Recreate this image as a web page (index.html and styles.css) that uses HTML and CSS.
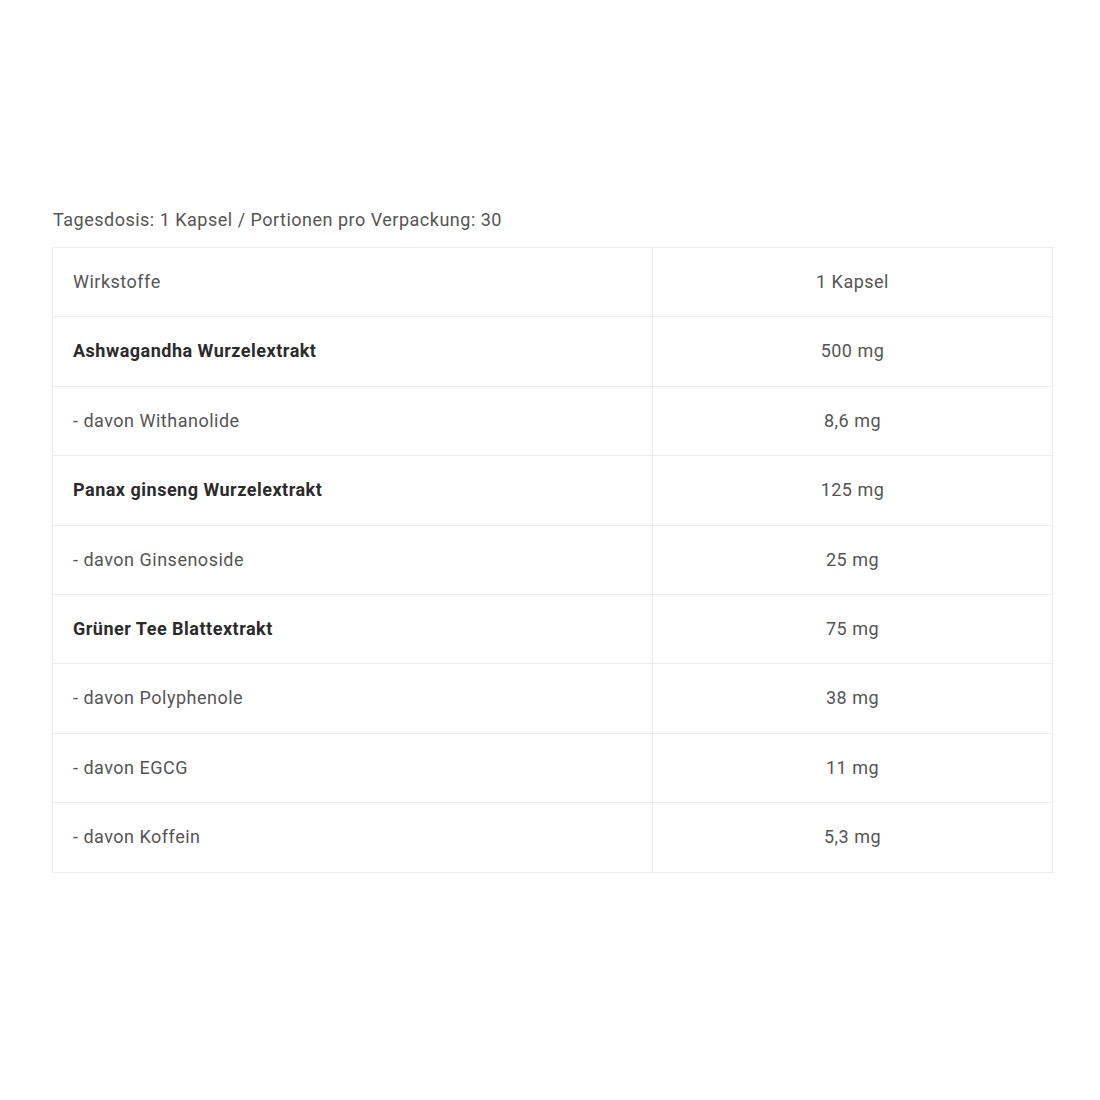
FILE: index.html
```html
<!DOCTYPE html>
<html lang="de">
<head>
<meta charset="utf-8">
<link rel="stylesheet" href="styles.css">
</head>
<body>
<div class="wrap">
  <p class="caption">Tagesdosis: 1 Kapsel / Portionen pro Verpackung: 30</p>
  <table class="facts">
    <colgroup><col class="c-name"><col class="c-val"></colgroup>
    <tr><td>Wirkstoffe</td><td class="val">1 Kapsel</td></tr>
    <tr><td class="b">Ashwagandha Wurzelextrakt</td><td class="val">500 mg</td></tr>
    <tr><td>- davon Withanolide</td><td class="val">8,6 mg</td></tr>
    <tr><td class="b">Panax ginseng Wurzelextrakt</td><td class="val">125 mg</td></tr>
    <tr><td>- davon Ginsenoside</td><td class="val">25 mg</td></tr>
    <tr><td class="b">Grüner Tee Blattextrakt</td><td class="val">75 mg</td></tr>
    <tr><td>- davon Polyphenole</td><td class="val">38 mg</td></tr>
    <tr><td>- davon EGCG</td><td class="val">11 mg</td></tr>
    <tr><td>- davon Koffein</td><td class="val">5,3 mg</td></tr>
  </table>
</div>
</body>
</html>
```
FILE: styles.css
```css
html, body {
  margin: 0;
  padding: 0;
  background: #fff;
}
body {
  font-family: Roboto, "Liberation Sans", Arial, sans-serif;
  font-size: 18px;
  letter-spacing: 0.5px;
  color: #555;
}
.wrap {
  padding: 208px 48px 0 52px;
}
.caption {
  margin: 0 0 15px 1px;
  line-height: 24px;
  color: #555;
}
.facts {
  width: 1000px;
  border-collapse: collapse;
  table-layout: fixed;
}
.c-name { width: 600px; }
.c-val { width: 400px; }
.facts td {
  border: 1px solid #ececec;
  padding: 22px 20px;
  line-height: 24.4px;
  color: #555;
}
.facts td.b {
  font-weight: 700;
  color: #2b2b2b;
}
.facts td.val {
  text-align: center;
}
```
